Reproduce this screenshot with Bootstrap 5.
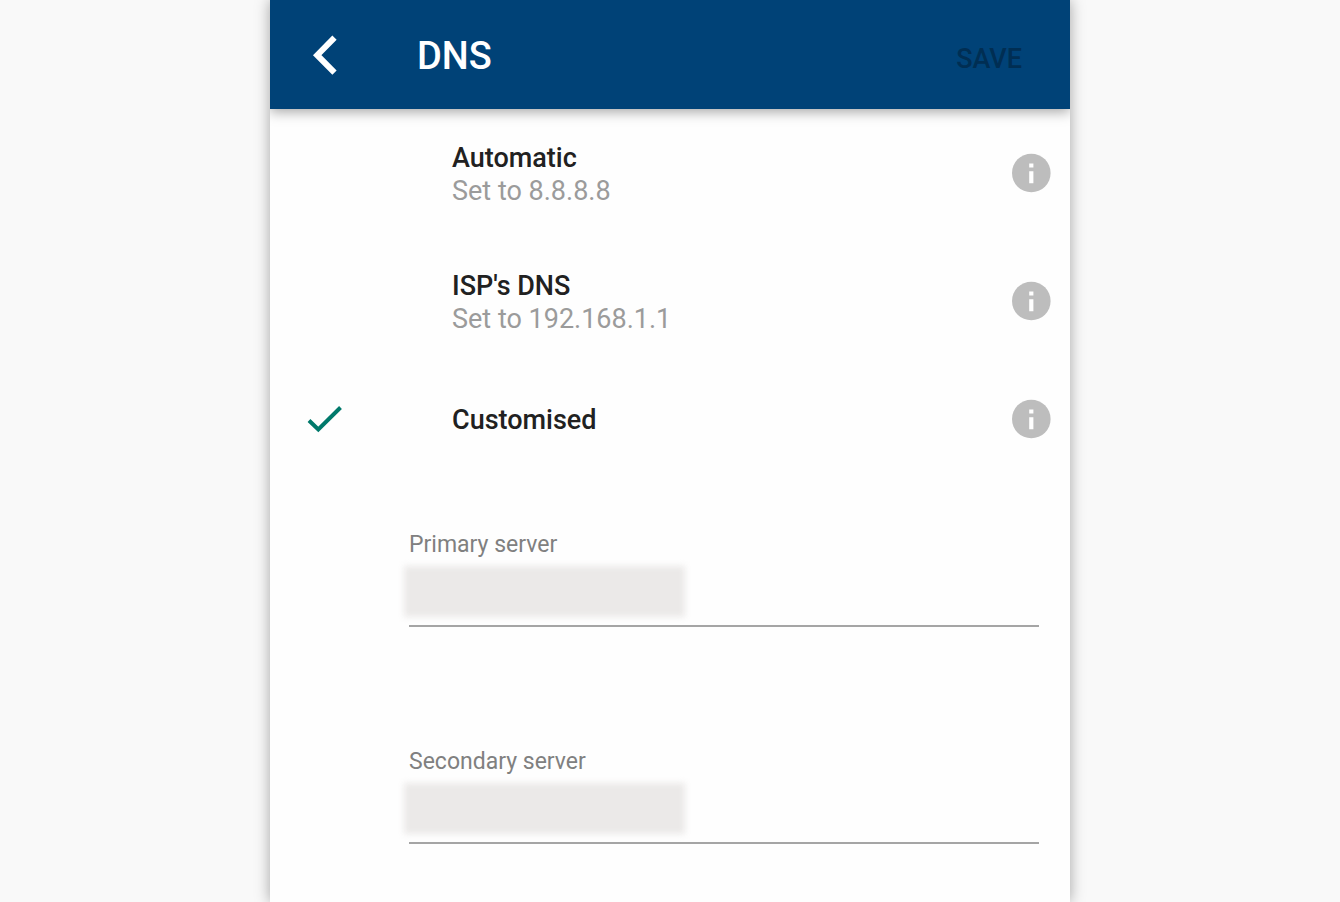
<!DOCTYPE html>
<html lang="en">
<head>
<meta charset="utf-8">
<meta name="viewport" content="width=device-width, initial-scale=1">
<title>DNS</title>
<link href="https://cdn.jsdelivr.net/npm/bootstrap@5.3.0/dist/css/bootstrap.min.css" rel="stylesheet">
<style>
  body { background: #f9f9f9; font-family: Roboto, "Liberation Sans", sans-serif; font-size: 27px; line-height: 33px; color: #212121; }
  .screen { max-width: 800px; background: #fefefe; box-shadow: 0 0 14px rgba(0, 0, 0, .35); }
  .app-bar { height: 109px; background: #004277; box-shadow: 0 3px 12px rgba(0, 0, 0, .35); clip-path: inset(0 0 -24px 0); }
  .lead-col { width: 109px; }
  .app-title { font-size: 38px; line-height: 48px; font-weight: 500; padding: 2px 0 0 38px; }
  .save-btn, .save-btn:disabled { font-size: 27px; line-height: 33px; font-weight: 500; color: #002e53; opacity: 1; margin: 9px 48px 0 0; }
  .option { min-height: 128px; }
  .option-short { min-height: 108px; }
  .option-label { cursor: pointer; }
  .option-text { padding: 3px 0 0 73px; }
  .option-name { font-weight: 500; }
  .option-note { color: #9b9b9b; }
  .tick { visibility: hidden; }
  .btn-check:checked + .option-label .tick { visibility: visible; }
  .info-btn { margin-right: 19px; }
  .servers { padding: 56px 31px 0 139px; gap: 119px; }
  .server-label { font-size: 23px; line-height: 32px; color: #808080; }
  .server-input, .server-input:focus { height: 66px; background: transparent; border-bottom: 2px solid #a5a5a5; box-shadow: none; }
  .redacted::before { content: ""; position: absolute; left: -5px; top: 5px; width: 281px; height: 51px; background: #ebe9e8; filter: blur(3px); }
</style>
</head>
<body>
<main class="screen mx-auto min-vh-100">
  <header class="app-bar d-flex align-items-center position-relative">
    <div class="lead-col d-flex justify-content-center">
      <button type="button" class="btn p-0 border-0 d-flex" aria-label="Back">
        <svg width="40" height="40" viewBox="0 0 40 40" fill="none" stroke="#fff" stroke-width="6"><path d="M29.500 2.700 12.200 20.200 29.500 37.700"/></svg>
      </button>
    </div>
    <h1 class="app-title mb-0 text-white">DNS</h1>
    <button type="button" class="save-btn btn p-0 border-0 ms-auto" disabled>SAVE</button>
  </header>

  <form>
    <div class="option d-flex">
      <input class="btn-check" type="radio" name="dns" id="dns-auto">
      <label class="option-label d-flex align-items-center flex-grow-1" for="dns-auto">
        <span class="lead-col d-flex justify-content-center"><svg class="tick" width="36" height="28" viewBox="0 0 36 28" fill="none" stroke="#00796b" stroke-width="4"><path d="M2 15.500 11.300 24.500 33.500 2.500"/></svg></span>
        <span class="option-text"><span class="option-name d-block">Automatic</span><span class="option-note d-block">Set to 8.8.8.8</span></span>
      </label>
      <button type="button" class="info-btn btn p-0 border-0 d-flex align-self-center" aria-label="About Automatic">
        <svg width="40" height="40" viewBox="0 0 40 40"><circle cx="20.300" cy="20" r="19.300" fill="#bdbdbd"/><path fill="#fff" d="M18.200 10.500h4.200v4h-4.200zM18.200 18.200h4.200v12h-4.200z"/></svg>
      </button>
    </div>
    <div class="option d-flex">
      <input class="btn-check" type="radio" name="dns" id="dns-isp">
      <label class="option-label d-flex align-items-center flex-grow-1" for="dns-isp">
        <span class="lead-col d-flex justify-content-center"><svg class="tick" width="36" height="28" viewBox="0 0 36 28" fill="none" stroke="#00796b" stroke-width="4"><path d="M2 15.500 11.300 24.500 33.500 2.500"/></svg></span>
        <span class="option-text"><span class="option-name d-block">ISP's DNS</span><span class="option-note d-block">Set to 192.168.1.1</span></span>
      </label>
      <button type="button" class="info-btn btn p-0 border-0 d-flex align-self-center" aria-label="About ISP's DNS">
        <svg width="40" height="40" viewBox="0 0 40 40"><circle cx="20.300" cy="20" r="19.300" fill="#bdbdbd"/><path fill="#fff" d="M18.200 10.500h4.200v4h-4.200zM18.200 18.200h4.200v12h-4.200z"/></svg>
      </button>
    </div>
    <div class="option-short d-flex">
      <input class="btn-check" type="radio" name="dns" id="dns-custom" checked>
      <label class="option-label d-flex align-items-center flex-grow-1" for="dns-custom">
        <span class="lead-col d-flex justify-content-center"><svg class="tick" width="36" height="28" viewBox="0 0 36 28" fill="none" stroke="#00796b" stroke-width="4"><path d="M2 15.500 11.300 24.500 33.500 2.500"/></svg></span>
        <span class="option-text option-name">Customised</span>
      </label>
      <button type="button" class="info-btn btn p-0 border-0 d-flex align-self-center" aria-label="About Customised">
        <svg width="40" height="40" viewBox="0 0 40 40"><circle cx="20.300" cy="20" r="19.300" fill="#bdbdbd"/><path fill="#fff" d="M18.200 10.500h4.200v4h-4.200zM18.200 18.200h4.200v12h-4.200z"/></svg>
      </button>
    </div>

    <div class="servers d-flex flex-column">
      <div>
        <label class="server-label d-block" for="primary">Primary server</label>
        <div class="redacted position-relative"><input class="server-input form-control rounded-0 border-top-0 border-start-0 border-end-0 px-0 position-relative" type="text" id="primary"></div>
      </div>
      <div>
        <label class="server-label d-block" for="secondary">Secondary server</label>
        <div class="redacted position-relative"><input class="server-input form-control rounded-0 border-top-0 border-start-0 border-end-0 px-0 position-relative" type="text" id="secondary"></div>
      </div>
    </div>
  </form>
</main>
<script src="https://cdn.jsdelivr.net/npm/bootstrap@5.3.0/dist/js/bootstrap.bundle.min.js"></script>
</body>
</html>
